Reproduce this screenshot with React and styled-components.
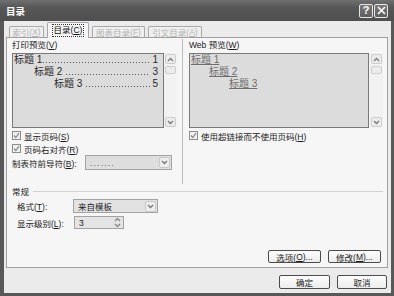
import React from "react";
import styled, { createGlobalStyle } from "styled-components";

const GlobalStyle = createGlobalStyle`
  html, body { margin: 0; padding: 0; background: #fff; }
  body {
    font-family: "Liberation Sans", "Noto Sans CJK SC", sans-serif;
    font-size: 8.5px;
    color: #1a1a1a;
  }
  u { text-decoration: underline; }
`;

const Window = styled.div`
  width: 394px;
  height: 296px;
  display: flex;
  flex-direction: column;
  background: #585858;
`;

const TitleBar = styled.div`
  height: 21px;
  flex: none;
  display: flex;
  align-items: center;
  justify-content: space-between;
  padding: 0 6px;
  background: linear-gradient(#707070, #575757 35%, #4f4f4f);
`;

const Title = styled.span`
  color: #fff;
  font-weight: bold;
  font-size: 9.5px;
`;

const CapButtons = styled.div`
  display: flex;
  gap: 1px;
`;

const CapButton = styled.div`
  width: 14px;
  height: 14px;
  box-sizing: border-box;
  border: 1px solid #e6e6e6;
  border-radius: 2px;
  background: linear-gradient(#7a7a7a, #5e5e5e);
  color: #fff;
  display: flex;
  align-items: center;
  justify-content: center;
  font-weight: bold;
  font-size: 11px;
  line-height: 1;
`;

const Frame = styled.div`
  flex: 1;
  display: flex;
  padding: 0 3px 3px 4px;
`;

const Body = styled.div`
  flex: 1;
  display: flex;
  flex-direction: column;
  background: #ebebeb;
  padding: 2px 3px 4px 2px;
`;

const TabRow = styled.div`
  height: 15px;
  display: flex;
  align-items: flex-end;
  gap: 3px;
  padding-left: 3px;
  margin-bottom: -1px;
  position: relative;
  z-index: 1;
`;

const Tab = styled.div`
  width: ${p => p.$w}px;
  height: ${p => (p.$active ? 16 : 12)}px;
  box-sizing: border-box;
  border: 1px solid #a9a9a9;
  border-bottom: ${p => (p.$active ? "none" : "1px solid #a0a0a0")};
  border-radius: 2px 2px 0 0;
  background: ${p => (p.$active ? "#f6f6f6" : "#efefef")};
  color: ${p => (p.$active ? "#111" : "#b3b3b3")};
  display: flex;
  align-items: center;
  justify-content: center;
`;

const Focus = styled.span`
  outline: 1px dotted #333;
  padding: 0 1px;
  line-height: 11px;
`;

const Panel = styled.div`
  flex: 1;
  display: flex;
  flex-direction: column;
  background: #f6f6f6;
  border: 1px solid #a0a0a0;
  padding: 1px 4px 4px 5px;
`;

const Columns = styled.div`
  height: 145px;
  display: flex;
`;

const Column = styled.div`
  width: ${p => p.$w}px;
  display: flex;
  flex-direction: column;
`;

const Separator = styled.div`
  width: 1px;
  margin: 0 6px 0 5px;
  background: #bcbcbc;
`;

const Label = styled.div`
  line-height: 12px;
  margin-bottom: 2px;
`;

const Preview = styled.div`
  height: 75px;
  display: flex;
`;

const PreviewArea = styled.div`
  flex: 1;
  box-sizing: border-box;
  border: 1px solid #7a7a7a;
  background: #dcdcdc;
  padding: 0 5px 0 1px;
  font-size: 10px;
`;

const Line = styled.div`
  height: 12px;
  line-height: 12px;
  display: flex;
  padding-left: ${p => p.$indent}px;
  color: ${p => (p.$link ? "#6e6e6e" : "#2a2a2a")};
`;

const Entry = styled.span`
  white-space: pre;
  text-decoration: ${p => (p.$link ? "underline" : "none")};
`;

const Leader = styled.span`
  flex: 1;
  height: 1px;
  align-self: flex-end;
  margin: 0 2px 3px 1px;
  background: repeating-linear-gradient(to right, #555 0 1px, transparent 1px 3px);
`;

const ScrollBar = styled.div`
  width: ${p => p.$w}px;
  display: flex;
  flex-direction: column;
  align-items: center;
  background: #f2f2f2;
  padding: 1px 0;
  box-sizing: border-box;
`;

const ScrollBtn = styled.div`
  width: 11px;
  height: ${p => p.$h || 10}px;
  margin-top: ${p => p.$mt || 0}px;
  box-sizing: border-box;
  border: 1px solid #cdcdcd;
  border-radius: 2px;
  background: #ececec;
  display: flex;
  align-items: center;
  justify-content: center;
  color: #7a7a7a;
`;

const Spacer = styled.div`
  flex: 1;
`;

const CheckRow = styled.div`
  height: 13px;
  display: flex;
  align-items: center;
  gap: 3px;
  margin-top: ${p => p.$mt || 0}px;
`;

const Box = styled.span`
  width: 9px;
  height: 9px;
  box-sizing: border-box;
  border: 1px solid #8e8e8e;
  background: #f0f0f0;
  display: flex;
  align-items: center;
  justify-content: center;
`;

const FieldRow = styled.div`
  height: ${p => p.$h}px;
  display: flex;
  align-items: center;
  justify-content: ${p => (p.$spread ? "space-between" : "flex-start")};
  padding: ${p => p.$pad || "0"};
  margin-top: ${p => p.$mt || 0}px;
`;

const FieldLabel = styled.span`
  width: ${p => (p.$w ? `${p.$w}px` : "auto")};
`;

const Combo = styled.div`
  width: ${p => p.$w}px;
  height: 100%;
  box-sizing: border-box;
  border: 1px solid #a3a3a3;
  background: ${p => p.$bg};
  display: flex;
  align-items: center;
  padding: 0 1px 0 4px;
`;

const ComboText = styled.span`
  flex: 1;
  color: ${p => p.$c || "#222"};
  letter-spacing: ${p => p.$ls || 0}px;
`;

const DropBtn = styled.span`
  width: 11px;
  height: 11px;
  box-sizing: border-box;
  border: 1px solid #c9c9c9;
  border-radius: 2px;
  background: #ededed;
  display: flex;
  align-items: center;
  justify-content: center;
  color: #777;
`;

const SpinBtns = styled.span`
  width: 9px;
  display: flex;
  flex-direction: column;
  align-items: center;
  gap: 1px;
  color: #888;
`;

const GroupHeader = styled.div`
  height: 12px;
  margin-top: 1px;
  display: flex;
  align-items: center;
`;

const GroupLine = styled.span`
  flex: 1;
  height: 1px;
  margin-left: 4px;
  background: #d2d2d2;
`;

const ButtonRow = styled.div`
  margin-top: auto;
  display: flex;
  justify-content: flex-end;
  gap: 7px;
  padding-right: ${p => p.$pr}px;
`;

const Button = styled.div`
  width: ${p => p.$w}px;
  height: ${p => p.$h}px;
  box-sizing: border-box;
  border: 1px solid #4c4c4c;
  border-radius: 2px;
  background: linear-gradient(#fdfdfd, #ececec);
  display: flex;
  align-items: center;
  justify-content: center;
`;

const Footer = styled(ButtonRow)`
  margin-top: 7px;
`;

const Chevron = ({ up }) => (
  <svg width="7" height="5" viewBox="0 0 7 5">
    <polyline
      points={up ? "1,4 3.5,1.5 6,4" : "1,1 3.5,3.5 6,1"}
      fill="none"
      stroke="currentColor"
      strokeWidth="1.3"
    />
  </svg>
);

const Tick = () => (
  <svg width="7" height="7" viewBox="0 0 7 7">
    <polyline points="1,3.5 2.8,5.5 6,1.2" fill="none" stroke="#8a8a8a" strokeWidth="1.2" />
  </svg>
);

const Close = () => (
  <svg width="9" height="9" viewBox="0 0 9 9">
    <path d="M1 1L8 8M8 1L1 8" stroke="#fff" strokeWidth="1.6" />
  </svg>
);

const Scroll = ({ w }) => (
  <ScrollBar $w={w}>
    <ScrollBtn $h={10}><Chevron up /></ScrollBtn>
    <ScrollBtn $h={8} $mt={2} />
    <Spacer />
    <ScrollBtn $h={10}><Chevron /></ScrollBtn>
  </ScrollBar>
);

const Check = ({ children, mt }) => (
  <CheckRow $mt={mt}>
    <Box><Tick /></Box>
    <span>{children}</span>
  </CheckRow>
);

const tocLines = [
  { indent: 0, text: "标题 1", page: "1", gap: false },
  { indent: 20, text: "标题 2", page: "3", gap: true },
  { indent: 40, text: "标题 3", page: "5", gap: true },
];

const webLines = [
  { indent: 0, text: "标题 1" },
  { indent: 18, text: "标题 2" },
  { indent: 38, text: "标题 3" },
];

export default function App() {
  return (
    <>
      <GlobalStyle />
      <Window>
        <TitleBar>
          <Title>目录</Title>
          <CapButtons>
            <CapButton>?</CapButton>
            <CapButton><Close /></CapButton>
          </CapButtons>
        </TitleBar>
        <Frame>
          <Body>
            <TabRow>
              <Tab $w={35}>索引(<u>X</u>)</Tab>
              <Tab $w={42} $active><Focus>目录(<u>C</u>)</Focus></Tab>
              <Tab $w={53}>图表目录(<u>F</u>)</Tab>
              <Tab $w={54}>引文目录(<u>A</u>)</Tab>
            </TabRow>
            <Panel>
              <Columns>
                <Column $w={165}>
                  <Label>打印预览(<u>V</u>)</Label>
                  <Preview>
                    <PreviewArea>
                      {tocLines.map(l => (
                        <Line key={l.text} $indent={l.indent}>
                          <Entry>{l.gap ? `${l.text} ` : l.text}</Entry>
                          <Leader />
                          <span>{l.page}</span>
                        </Line>
                      ))}
                    </PreviewArea>
                    <Scroll w={13} />
                  </Preview>
                  <Check mt={1}>显示页码(<u>S</u>)</Check>
                  <Check>页码右对齐(<u>R</u>)</Check>
                  <FieldRow $h={15} $spread $pad="0 5px 0 0">
                    <span>制表符前导符(<u>B</u>):</span>
                    <Combo $w={87} $bg="#dedede">
                      <ComboText $c="#555" $ls={1.2}>.......</ComboText>
                      <DropBtn><Chevron /></DropBtn>
                    </Combo>
                  </FieldRow>
                </Column>
                <Separator />
                <Column $w={194}>
                  <Label>Web 预览(<u>W</u>)</Label>
                  <Preview>
                    <PreviewArea>
                      {webLines.map(l => (
                        <Line key={l.text} $indent={l.indent} $link>
                          <Entry $link>{l.text}</Entry>
                        </Line>
                      ))}
                    </PreviewArea>
                    <Scroll w={14} />
                  </Preview>
                  <Check mt={1}>使用超链接而不使用页码(<u>H</u>)</Check>
                </Column>
              </Columns>
              <GroupHeader>
                <span>常规</span>
                <GroupLine />
              </GroupHeader>
              <FieldRow $h={14} $mt={2} $pad="0 0 0 5px">
                <FieldLabel $w={56}>格式(<u>T</u>):</FieldLabel>
                <Combo $w={85} $bg="#e2e2e2">
                  <ComboText>来自模板</ComboText>
                  <DropBtn><Chevron /></DropBtn>
                </Combo>
              </FieldRow>
              <FieldRow $h={13} $mt={3} $pad="0 0 0 5px">
                <FieldLabel $w={57}>显示级别(<u>L</u>):</FieldLabel>
                <Combo $w={50} $bg="#e4e4e4">
                  <ComboText>3</ComboText>
                  <SpinBtns>
                    <Chevron up />
                    <Chevron />
                  </SpinBtns>
                </Combo>
              </FieldRow>
              <ButtonRow $pr={2}>
                <Button $w={53} $h={13}>选项(<u>O</u>)...</Button>
                <Button $w={53} $h={13}>修改(<u>M</u>)...</Button>
              </ButtonRow>
            </Panel>
            <Footer $pr={1}>
              <Button $w={51} $h={14}>确定</Button>
              <Button $w={50} $h={14}>取消</Button>
            </Footer>
          </Body>
        </Frame>
      </Window>
    </>
  );
}
